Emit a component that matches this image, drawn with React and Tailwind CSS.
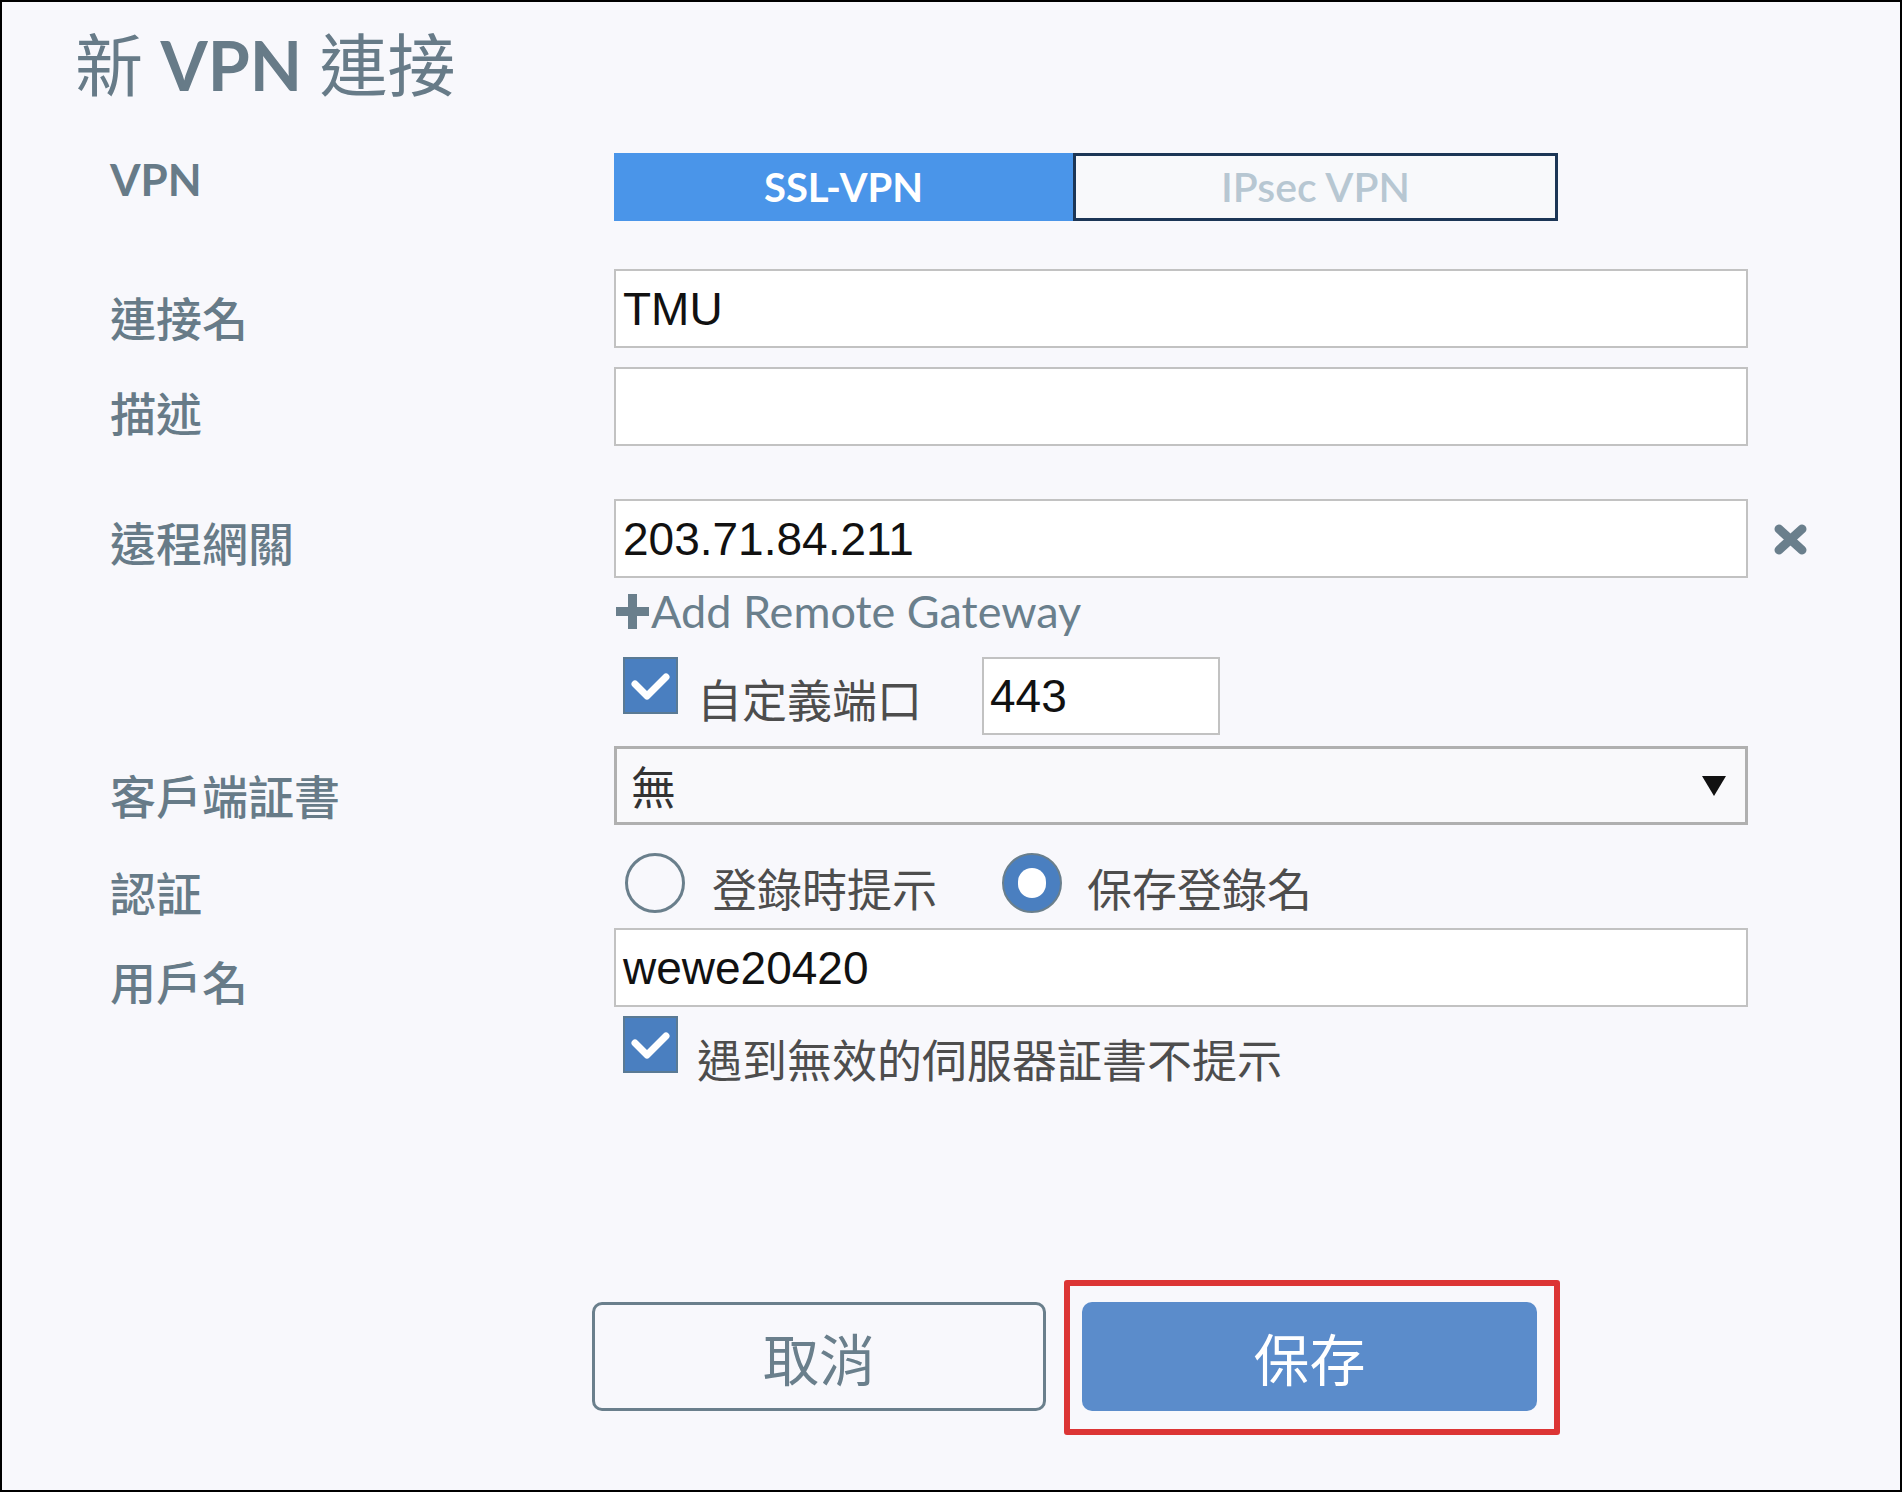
const labelCls =
  "w-[504px] shrink-0 font-['Noto_Sans_CJK_TC',sans-serif] text-[46px] leading-none font-medium text-[#677b88]";
const inputCls =
  "w-[1134px] h-[79px] border-2 border-[#c2c2c2] bg-white flex items-center pl-[7px] font-['Liberation_Sans',Arial,sans-serif] text-[46px] leading-none text-[#111]";
const optionCls =
  "font-['Noto_Sans_CJK_TC',sans-serif] text-[45px] leading-none text-[#4d4d4d]";

const CheckBox = () => (
  <svg width="55" height="57" viewBox="0 0 55 57" className="shrink-0">
    <rect x="1" y="1" width="53" height="55" fill="#4a7fc0" stroke="#5a7a94" strokeWidth="2" />
    <polyline
      points="12,27 24,39 43,20"
      fill="none"
      stroke="#fff"
      strokeWidth="7"
      strokeLinecap="round"
      strokeLinejoin="round"
    />
  </svg>
);

const App = () => {
  return (
    <div className="w-[1902px] h-[1492px] border-2 border-black bg-[#f8f8fc] overflow-hidden">
      {/* Title */}
      <h1 className="ml-[73px] mt-[29px] font-['Lato','Noto_Sans_CJK_TC',sans-serif] text-[68px] leading-none font-normal text-[#677b88]">
        新 <span className="font-bold">VPN</span> 連接
      </h1>

      <div className="ml-[108px] flex flex-col">
        {/* VPN type toggle */}
        <div className="mt-[54px] flex items-start h-[68px]">
          <div className="w-[504px] shrink-0 mt-[4px] font-['Lato',sans-serif] text-[44px] leading-none font-bold text-[#677b88]">
            VPN
          </div>
          <div className="flex w-[944px] h-[68px]">
            <div className="w-[459px] h-full bg-[#4a95e9] flex items-center justify-center font-['Lato',sans-serif] text-[40px] font-bold text-white">
              SSL-VPN
            </div>
            <div className="flex-1 h-full border-[3px] border-[#1c3656] bg-[#f8f9fb] flex items-center justify-center font-['Lato',sans-serif] text-[41px] font-semibold text-[#b7c7d2]">
              IPsec VPN
            </div>
          </div>
        </div>

        {/* Connection name */}
        <div className="mt-[48px] flex items-start">
          <div className={`${labelCls} mt-[24px]`}>連接名</div>
          <div className={inputCls}>TMU</div>
        </div>

        {/* Description */}
        <div className="mt-[19px] flex items-start">
          <div className={`${labelCls} mt-[21px]`}>描述</div>
          <div className={`${inputCls} h-[78px]`}></div>
        </div>

        {/* Remote gateway */}
        <div className="mt-[53px] flex items-start">
          <div className={`${labelCls} mt-[19px]`}>遠程網關</div>
          <div className={inputCls}>203.71.84.211</div>
          <svg width="35" height="33" viewBox="0 0 35 33" className="ml-[25px] mt-[24px]">
            <path d="M6 6 L29 27 M29 6 L6 27" stroke="#6a7f8c" strokeWidth="9" strokeLinecap="round" />
          </svg>
        </div>

        {/* Add remote gateway */}
        <div className="mt-[11px] flex items-start">
          <div className="w-[504px] shrink-0"></div>
          <svg width="33" height="35" viewBox="0 0 33 35" className="ml-[2px] mt-[5px]">
            <rect x="0" y="13" width="33" height="9" fill="#6a7f8c" />
            <rect x="12" y="0" width="9" height="35" fill="#6a7f8c" />
          </svg>
          <span className="ml-[2px] font-['Lato',sans-serif] text-[45px] leading-none text-[#6a7f8c]">
            Add Remote Gateway
          </span>
        </div>

        {/* Custom port */}
        <div className="mt-[23px] flex items-start h-[78px]">
          <div className="w-[504px] shrink-0"></div>
          <div className="ml-[9px]">
            <CheckBox />
          </div>
          <span className={`${optionCls} ml-[19px] mt-[19px]`}>自定義端口</span>
          <div className="ml-[60px] w-[238px] h-[78px] border-2 border-[#c2c2c2] bg-white flex items-center pl-[6px] font-['Liberation_Sans',Arial,sans-serif] text-[46px] leading-none text-[#111]">
            443
          </div>
        </div>

        {/* Client certificate */}
        <div className="mt-[11px] flex items-start">
          <div className={`${labelCls} mt-[25px]`}>客戶端証書</div>
          <div className="w-[1134px] h-[79px] border-[3px] border-[#b0b0b0] bg-[#f9f9fb] flex items-center justify-between pl-[14px] pr-[19px]">
            <span className={`${optionCls} text-[#333]`}>無</span>
            <svg width="24" height="20" viewBox="0 0 24 20">
              <polygon points="0,0 24,0 12,20" fill="#111" />
            </svg>
          </div>
        </div>

        {/* Authentication */}
        <div className="mt-[28px] flex items-start h-[60px]">
          <div className={`${labelCls} mt-[15px]`}>認証</div>
          <div className="ml-[11px] w-[60px] h-[60px] shrink-0 rounded-full border-[3px] border-[#6a7f8c]"></div>
          <span className={`${optionCls} ml-[27px] mt-[12px]`}>登錄時提示</span>
          <div className="ml-[65px] w-[60px] h-[60px] shrink-0 rounded-full border-2 border-[#6a7f8c] bg-[#4a7fc0] flex items-center justify-center">
            <div className="w-[28px] h-[30px] rounded-full bg-white"></div>
          </div>
          <span className={`${optionCls} ml-[25px] mt-[12px]`}>保存登錄名</span>
        </div>

        {/* Username */}
        <div className="mt-[15px] flex items-start">
          <div className={`${labelCls} mt-[29px]`}>用戶名</div>
          <div className={inputCls}>wewe20420</div>
        </div>

        {/* Ignore invalid certificate */}
        <div className="mt-[9px] flex items-start h-[59px]">
          <div className="w-[504px] shrink-0"></div>
          <div className="ml-[9px]">
            <CheckBox />
          </div>
          <span className={`${optionCls} ml-[19px] mt-[20px]`}>遇到無效的伺服器証書不提示</span>
        </div>

        {/* Actions */}
        <div className="mt-[205px] ml-[482px] flex items-start">
          <button className="mt-[22px] w-[454px] h-[109px] rounded-[10px] border-[3px] border-[#6a7f8c] bg-[#f8f8fc] font-['Noto_Sans_CJK_TC',sans-serif] text-[56px] leading-none text-[#6a7f8c]">
            取消
          </button>
          <div className="ml-[18px] w-[496px] h-[155px] border-[6px] border-[#dc3535] rounded-[3px] pl-[12px] pt-[16px]">
            <button className="w-[455px] h-[109px] rounded-[10px] bg-[#5b8ccb] font-['Noto_Sans_CJK_TC',sans-serif] text-[56px] leading-none text-white">
              保存
            </button>
          </div>
        </div>
      </div>
    </div>
  );
};

export default App;
